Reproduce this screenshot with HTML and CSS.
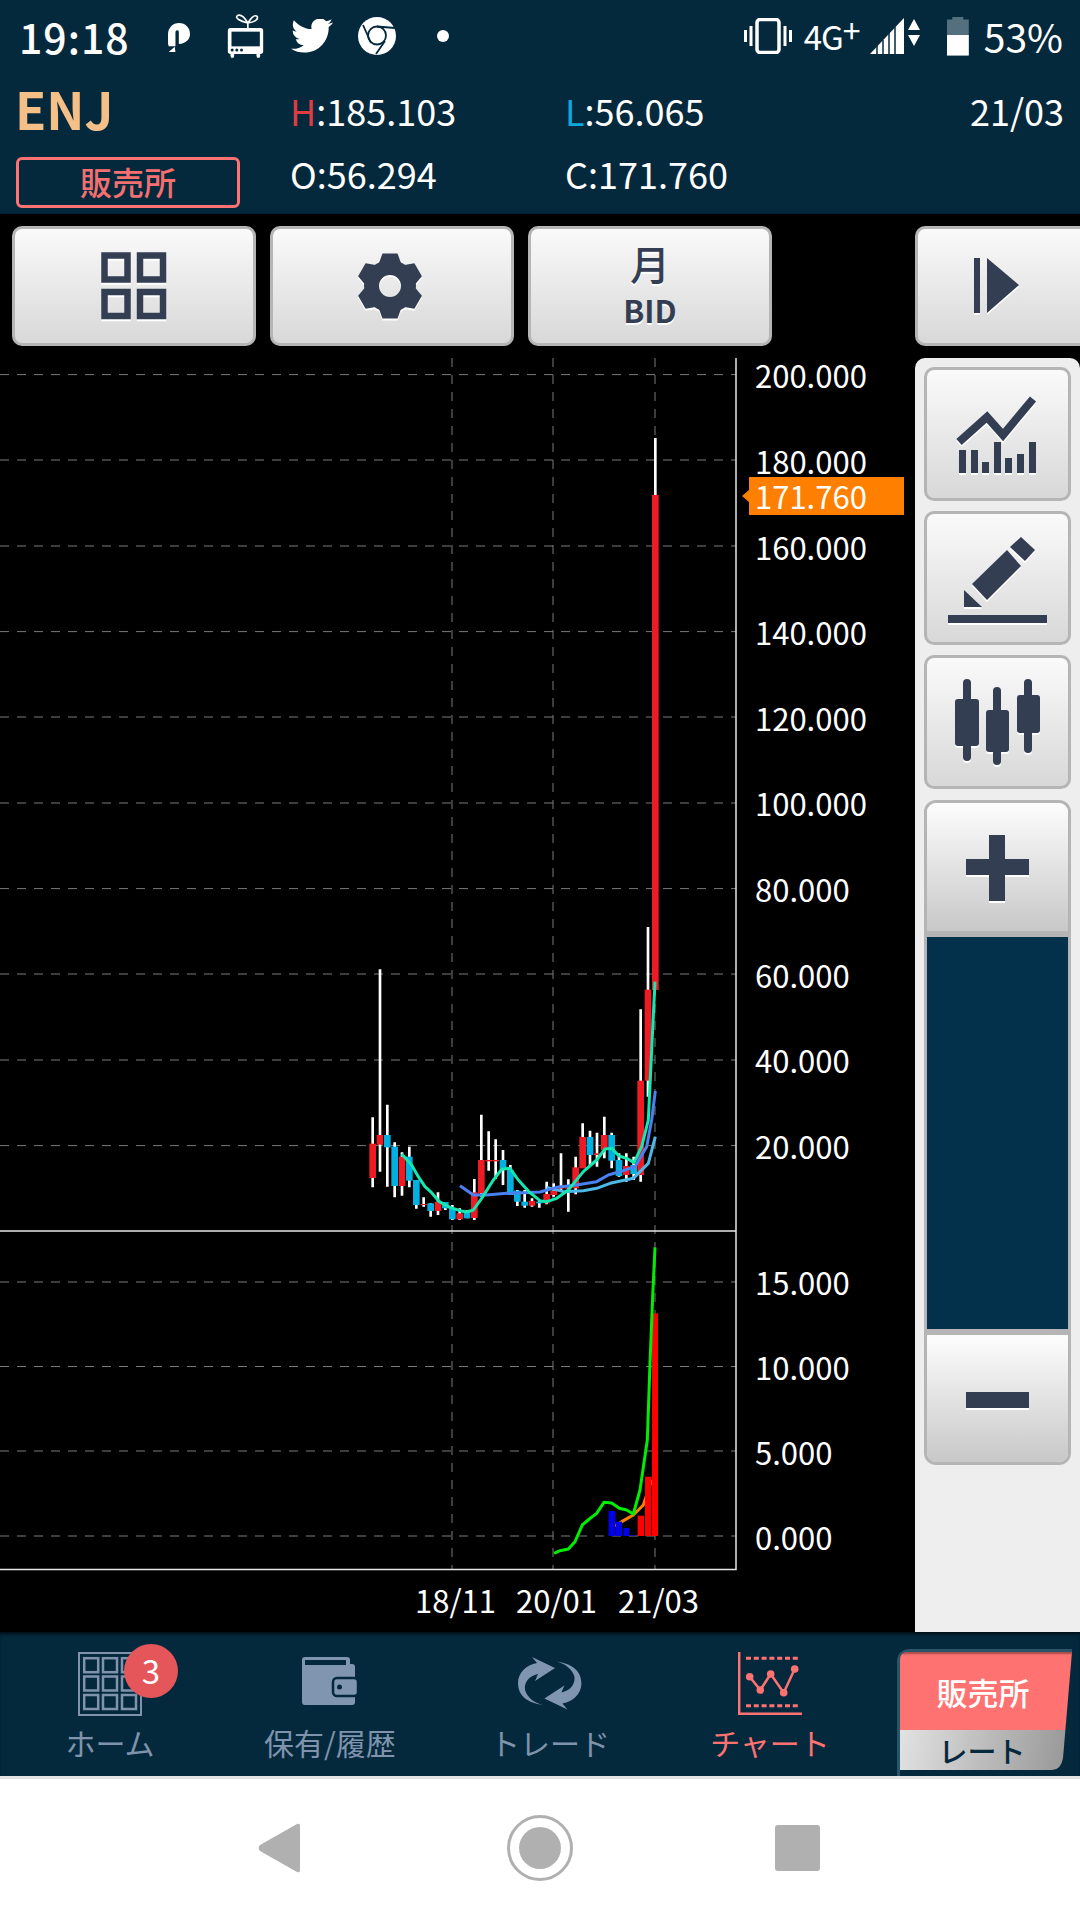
FILE: index.html
```html
<!DOCTYPE html>
<html lang="ja">
<head>
    <meta charset="UTF-8">
    <meta name="viewport" content="width=device-width, initial-scale=1.0">
    <title>ENJ チャート</title>
    <link rel="stylesheet" href="styles.css">
</head>
<body>
<div class="app">
    <div class="statusbar">
        <span class="clock">19:18</span>
        <svg class="st-icon st-p" viewBox="0 0 65 85"><path fill="#fff" d="M0 34C0 14 14 0 33 0c18 0 32 14 32 32 0 16-12 28-33 30V28c0-5-1-7-5-7s-5 3-5 8v39H2L0 60zM2 85l18-15 2 15z"/></svg>
        <svg class="st-icon st-tv" viewBox="230 25 110 132"><path d="M292 52C270 47 250 37 262 29c13-4 23 11 30 23 8-12 18-27 28-20 5 10-10 18-28 20zM292 52v16" fill="none" stroke="#fff" stroke-width="5"/><rect x="232" y="67" width="106" height="78" rx="8" fill="#fff"/><rect x="243" y="78" width="85" height="44" fill="#05293c"/><circle cx="245" cy="133" r="4.500" fill="#05293c"/><circle cx="259" cy="133" r="4.500" fill="#05293c"/><circle cx="273" cy="133" r="4.500" fill="#05293c"/><path d="M240 145h11v6l-2 5h-7l-2-5zM318 145h11v6l-2 5h-7l-2-5z" fill="#fff"/></svg>
        <svg class="st-icon st-tw" viewBox="0 2.500 24 19.500"><path fill="#fff" d="M23.953 4.570a10 10 0 01-2.825.775 4.958 4.958 0 002.163-2.723c-.951.555-2.005.959-3.127 1.184a4.920 4.920 0 00-8.384 4.482C7.690 8.095 4.067 6.130 1.640 3.162a4.822 4.822 0 00-.666 2.475c0 1.710.870 3.213 2.188 4.096a4.904 4.904 0 01-2.228-.616v.060a4.923 4.923 0 003.946 4.827 4.996 4.996 0 01-2.212.085 4.936 4.936 0 004.604 3.417 9.867 9.867 0 01-6.102 2.105c-.390 0-.779-.023-1.170-.067a13.995 13.995 0 007.557 2.209c9.053 0 13.998-7.496 13.998-13.985 0-.210 0-.420-.015-.630A9.935 9.935 0 0024 4.590z"/></svg>
        <svg class="st-icon st-ch" viewBox="0 0 38 38"><circle cx="19" cy="19" r="19" fill="#fff"/><circle cx="19" cy="18.500" r="9" fill="none" stroke="#05293c" stroke-width="1.800"/><path d="M19 9.500L37 11M5 8l8 18M27 24l-9 13" stroke="#05293c" stroke-width="1.800"/></svg>
        <span class="st-dot"></span>
        <svg class="st-icon st-vib" viewBox="0 0 48 36"><rect x="13" y="1.500" width="22" height="33" rx="3" fill="none" stroke="#fff" stroke-width="3.500"/><path d="M7 8v20M1.500 12v12M41 8v20M46.500 12v12" stroke="#fff" stroke-width="3"/></svg>
        <span class="st-net">4G<sup>+</sup></span>
        <svg class="st-icon st-sig" viewBox="0 0 52 36"><path d="M0 36L34 0v36z" fill="#fff"/><path d="M7 36V28M13 36V22M19 36V15M25 36V9" stroke="#05293c" stroke-width="1.500"/><path d="M44 0l6 11H38zM44 27l6-11H38z" fill="#fff" transform="translate(0 1)"/></svg>
        <span class="st-batt"><i></i></span>
        <span class="st-pct">53%</span>
    </div>

    <div class="quote">
        <div class="quote-left">
            <div class="symbol">ENJ</div>
            <div class="market">販売所</div>
        </div>
        <div class="quote-col col-a">
            <div><span class="hi">H</span>:185.103</div>
            <div>O:56.294</div>
        </div>
        <div class="quote-col col-b">
            <div><span class="lo">L</span>:56.065</div>
            <div>C:171.760</div>
        </div>
        <div class="quote-date">21/03</div>
    </div>

    <div class="toolbar">
        <div class="btn tool">
            <svg class="ico" width="66" height="68" viewBox="0 0 66 68"><g fill="none" stroke="#333e52" stroke-width="6.500"><rect x="3.500" y="3.500" width="23" height="24"/><rect x="39" y="3.500" width="23" height="24"/><rect x="3.500" y="40" width="23" height="24"/><rect x="39" y="40" width="23" height="24"/></g></svg>
        </div>
        <div class="btn tool">
            <svg class="ico ico-gear" width="68" height="68" viewBox="-34 -34 68 68">
                <circle r="18.500" fill="none" stroke="#333e52" stroke-width="15"/>
                <g fill="#333e52">
                    <path d="M-7.500-32.500h15L11-23h-22z"/>
                    <path d="M-7.500-32.500h15L11-23h-22z" transform="rotate(60)"/>
                    <path d="M-7.500-32.500h15L11-23h-22z" transform="rotate(120)"/>
                    <path d="M-7.500-32.500h15L11-23h-22z" transform="rotate(180)"/>
                    <path d="M-7.500-32.500h15L11-23h-22z" transform="rotate(240)"/>
                    <path d="M-7.500-32.500h15L11-23h-22z" transform="rotate(300)"/>
                </g>
            </svg>
        </div>
        <div class="btn tool tool-text">
            <span class="tt-top">月</span>
            <span class="tt-bid">BID</span>
        </div>
        <div class="btn tool-play">
            <svg class="ico" width="46" height="56" viewBox="0 0 46 56"><rect x="0" y="0" width="6" height="55" fill="#333e52"/><path d="M13 0l32 27L13 55z" fill="#333e52"/></svg>
        </div>
    </div>

    <div class="main">
        <svg class="chart" width="915" height="1274" viewBox="0 358 915 1274">
            <!-- grid -->
            <g class="grid">
                <path d="M0 374.600H736M0 460H736M0 546H736M0 631.600H736M0 717H736M0 803H736M0 888.600H736M0 974H736M0 1060H736M0 1145.600H736"/>
                <path d="M0 1282H736M0 1366.500H736M0 1451H736M0 1536H736"/>
                <path d="M452 358V1569M553 358V1569M655 358V1569"/>
            </g>
            <path class="frame" d="M736 358V1569.500H0M0 1231H736"/>

            <!-- candles, drawn in 3x units from the crop at 350,950 -->
            <g transform="translate(350 950) scale(.33333)">
                <g class="wicks">
                    <path d="M68 502V712M90 58V665M112 464V710M134 577V742M156 607V737M178 590V712M199 690V776M221 742V770M242 760V800M264 727V795M286 756V780M307 765V810M329 775V810M351 780V805M373 687V810M394 494V740M416 544V662M437 568V686M459 600V705M481 645V735M502 720V768M524 720V773M546 745V770M568 750V773M590 695V763M611 700V740M633 610V725M655 688V785M677 620V733M698 520V650M720 542V645M741 548V650M763 500V625M785 548V655M807 610V680M829 610V695M851 620V690M872 178V695M894 -69V440M916 -1536V-1365"/>
                </g>
                <g class="up">
                    <rect x="58" y="581" width="20" height="103"/><rect x="80" y="555" width="20" height="29"/><rect x="146" y="620" width="20" height="88"/><rect x="211" y="762" width="20" height="3"/><rect x="254" y="756" width="20" height="27"/><rect x="319" y="790" width="20" height="18"/><rect x="363" y="727" width="20" height="77"/><rect x="384" y="630" width="20" height="100"/><rect x="406" y="630" width="20" height="4"/><rect x="427" y="630" width="20" height="4"/><rect x="536" y="753" width="20" height="14"/><rect x="580" y="732" width="20" height="28"/><rect x="601" y="722" width="20" height="13"/><rect x="623" y="713" width="20" height="3"/><rect x="645" y="712" width="20" height="4"/><rect x="667" y="652" width="20" height="63"/><rect x="688" y="561" width="20" height="94"/><rect x="731" y="610" width="20" height="5"/><rect x="753" y="555" width="20" height="45"/><rect x="819" y="648" width="20" height="27"/><rect x="862" y="392" width="20" height="283"/><rect x="884" y="119" width="20" height="273"/><rect x="906" y="-1365" width="20" height="1485"/>
                </g>
                <g class="down">
                    <rect x="102" y="555" width="20" height="37"/><rect x="124" y="590" width="20" height="118"/><rect x="168" y="620" width="20" height="72"/><rect x="189" y="690" width="20" height="75"/><rect x="232" y="760" width="20" height="23"/><rect x="276" y="756" width="20" height="19"/><rect x="297" y="775" width="20" height="33"/><rect x="341" y="785" width="20" height="20"/><rect x="449" y="630" width="20" height="30"/><rect x="471" y="660" width="20" height="75"/><rect x="492" y="722" width="20" height="33"/><rect x="514" y="755" width="20" height="12"/><rect x="558" y="755" width="20" height="5"/><rect x="710" y="561" width="20" height="54"/><rect x="775" y="555" width="20" height="77"/><rect x="797" y="630" width="20" height="48"/><rect x="841" y="645" width="20" height="27"/>
                </g>
                <polyline class="ma ma-c" points="590,712 640,725 700,722 740,715 780,700 850,685 895,640 916,560"/>
                <polyline class="ma ma-b" points="330,707 370,735 410,735 470,730 520,728 570,726 620,712 680,705 740,695 775,675 820,662 855,650 890,590 905,510 916,423"/>
                <polyline class="ma ma-a" points="155,612 185,645 205,680 225,710 245,728 268,755 300,772 330,782 350,786 370,780 395,745 430,690 455,658 480,655 505,690 540,728 570,752 590,755 620,745 655,720 700,665 740,630 765,597 785,595 807,618 830,625 852,638 875,590 895,510 905,300 915,95"/>
            </g>

            <!-- volume panel, 3x units from the crop at 530,1220 -->
            <g transform="translate(530 1220) scale(.33333)">
                <polyline class="osc osc-o" points="255,918 275,905 310,885 340,855 365,780"/>
                <g class="vol-down"><rect x="236" y="873" width="20" height="75"/><rect x="258" y="905" width="18" height="43"/><rect x="280" y="924" width="18" height="24"/><rect x="300" y="946" width="18" height="2"/></g>
                <g class="vol-up"><rect x="323" y="887" width="19" height="61"/><rect x="345" y="770" width="19" height="178"/><rect x="366" y="280" width="18" height="668"/></g>
                <polyline class="osc osc-g" points="72,1000 90,992 115,987 135,965 157,915 178,897 200,880 222,847 245,849 268,865 290,870 310,882 330,810 352,660 360,430 368,230 375,82"/>
            </g>

            <!-- axis -->
            <g class="axis">
                <text x="755" y="388">200.000</text>
                <text x="755" y="474">180.000</text>
                <text x="755" y="560">160.000</text>
                <text x="755" y="645">140.000</text>
                <text x="755" y="731">120.000</text>
                <text x="755" y="816">100.000</text>
                <text x="755" y="902">80.000</text>
                <text x="755" y="988">60.000</text>
                <text x="755" y="1073">40.000</text>
                <text x="755" y="1159">20.000</text>
                <text x="755" y="1295">15.000</text>
                <text x="755" y="1380">10.000</text>
                <text x="755" y="1465">5.000</text>
                <text x="755" y="1550">0.000</text>
                <text x="415" y="1613">18/11</text>
                <text x="516" y="1613">20/01</text>
                <text x="618" y="1613">21/03</text>
            </g>
            <path class="tag" d="M742 496l7-6v-13H904v38H749v-13z"/>
            <text class="axis-now" x="755" y="509">171.760</text>
        </svg>

        <div class="side">
            <div class="btn side-btn">
                <svg class="ico" width="147" height="128" viewBox="0 3 147 128"><polyline points="35,75 63,50 79,68 109,32" fill="none" stroke="#333e52" stroke-width="8"/><g fill="#333e52"><rect x="35" y="83" width="7" height="23"/><rect x="47" y="83" width="7" height="23"/><rect x="58" y="95" width="7" height="11"/><rect x="70" y="75" width="7" height="31"/><rect x="81" y="91" width="7" height="15"/><rect x="93" y="87" width="7" height="19"/><rect x="105" y="75" width="7" height="31"/></g></svg>
            </div>
            <div class="btn side-btn">
                <svg class="ico" width="147" height="128" viewBox="0 3 147 128"><g fill="#333e52"><path d="M48 73L83 39l14 16-34 34z"/><path d="M86 36l11-10 14 13-10 11z"/><path d="M40 79l18 17H40z"/><rect x="24" y="104" width="99" height="8"/></g></svg>
            </div>
            <div class="btn side-btn">
                <svg class="ico" width="147" height="128" viewBox="0 3 147 128"><g fill="#333e52"><rect x="39" y="24" width="8" height="82" rx="4"/><rect x="31" y="44" width="24" height="47" rx="3"/><rect x="69" y="32" width="8" height="78" rx="4"/><rect x="62" y="55" width="23" height="42" rx="3"/><rect x="100" y="24" width="8" height="74" rx="4"/><rect x="93" y="40" width="23" height="38" rx="3"/></g></svg>
            </div>
            <div class="zoombox">
                <div class="zoom-key zoom-plus">
                    <svg class="ico" width="63" height="66" viewBox="0 0 63 66"><path fill="#333e52" d="M23 0h16v24h24v16H39v26H23V40H0V24h23z"/></svg>
                </div>
                <div class="zoom-track"></div>
                <div class="zoom-key zoom-minus">
                    <svg class="ico" width="63" height="16" viewBox="0 0 63 16"><rect width="63" height="16" fill="#333e52"/></svg>
                </div>
            </div>
        </div>
    </div>

    <div class="tabbar">
        <div class="tab">
            <svg width="64" height="64" viewBox="0 0 64 64" fill="none" stroke="#7f93ad"><rect x="1" y="1" width="62" height="62" stroke-width="2"/><g stroke-width="2.500"><rect x="6.200" y="6.200" width="14" height="14"/><rect x="25" y="6.200" width="14" height="14"/><rect x="44" y="6.200" width="14" height="14"/><rect x="6.200" y="24.500" width="14" height="14"/><rect x="25" y="24.500" width="14" height="14"/><rect x="44" y="24.500" width="14" height="14"/><rect x="6.200" y="43" width="14" height="14"/><rect x="25" y="43" width="14" height="14"/><rect x="44" y="43" width="14" height="14"/></g></svg>
            <span class="badge">3</span>
            <span class="tab-label">ホーム</span>
        </div>
        <div class="tab">
            <svg width="66" height="64" viewBox="0 0 66 64"><path fill="#8096b0" d="M8 5H50a3 3 0 013 3v4h2a3 3 0 013 3v35a3 3 0 01-3 3H8a3 3 0 01-3-3V8a3 3 0 013-3z"/><path fill="#05293c" d="M8 8H49V13H8z"/><rect x="36" y="26" width="25" height="18" rx="4" fill="#8096b0" stroke="#05293c" stroke-width="2.500"/><circle cx="42.500" cy="35" r="2.500" fill="#05293c"/></svg>
            <span class="tab-label">保有/履歴</span>
        </div>
        <div class="tab">
            <svg width="64" height="64" viewBox="0 0 64 64" fill="#8096b0"><path d="M14 5L37 16 17 29l3-7C11 24 6 30 7 38c2 7 9 13 18 15C10 51 0 44 0 31 0 21 8 13 19 11z"/><path d="M14 5L37 16 17 29l3-7C11 24 6 30 7 38c2 7 9 13 18 15C10 51 0 44 0 31 0 21 8 13 19 11z" transform="rotate(180 31.700 31.300)"/></svg>
            <span class="tab-label">トレード</span>
        </div>
        <div class="tab tab-active">
            <svg width="64" height="64" viewBox="0 0 64 64"><path d="M1.200 0V61.800H64" fill="none" stroke="#ff7272" stroke-width="2.500"/><path d="M8 6.300H61M8 53.700H61" fill="none" stroke="#ff7272" stroke-width="3" stroke-dasharray="5 2.800"/><polyline points="11.700,24.700 22.300,38 32.700,22 45.700,40.700 56.700,17" fill="none" stroke="#ff7272" stroke-width="2.500"/><g fill="#ff7272"><circle cx="11.700" cy="24.700" r="3.800"/><circle cx="22.300" cy="38" r="3.800"/><circle cx="32.700" cy="22" r="3.800"/><circle cx="45.700" cy="40.700" r="3.800"/><circle cx="56.700" cy="17" r="3.800"/></g></svg>
            <span class="tab-label">チャート</span>
        </div>
        <div class="mode">
            <div class="mode-body">
                <div class="mode-on">販売所</div>
                <div class="mode-off">レート</div>
            </div>
        </div>
    </div>

    <div class="sysnav">
        <svg width="42" height="50" viewBox="0 0 42 50"><path d="M39 1a2 2 0 013 2v44a2 2 0 01-3 2L2 28a4 4 0 010-6z" fill="#b0b0b0"/></svg>
        <svg class="sys-home" width="66" height="66" viewBox="0 0 66 66"><circle cx="33" cy="33" r="31.500" fill="none" stroke="#b0b0b0" stroke-width="3"/><circle cx="33" cy="33" r="21" fill="#b0b0b0"/></svg>
        <span class="sys-square"></span>
    </div>
</div>
</body>
</html>
```

FILE: styles.css
```css
* {
    box-sizing: border-box;
}

html, body {
    margin: 0;
    padding: 0;
    background: #000;
}

body {
    width: 1080px;
    height: 1920px;
    overflow: hidden;
    font-family: "Noto Sans CJK JP", "Noto Sans", sans-serif;
    color: #fff;
}

.app {
    display: flex;
    flex-direction: column;
    height: 1920px;
}

/* status bar */
.statusbar {
    display: flex;
    align-items: center;
    height: 72px;
    background: #05293c;
    padding: 0 17px 0 19px;
}

.clock {
    font-size: 41px;
    font-weight: 500;
    letter-spacing: 1px;
    width: 149px;
}

.st-icon {
    flex: none;
    display: block;
}

.st-p { width: 22px; height: 29px; margin-top: 3px; }
.st-tv { width: 37px; height: 44px; margin-left: 37px; }
.st-tw { width: 42px; height: 34px; margin-left: 27px; }
.st-ch { width: 38px; height: 38px; margin-left: 25px; }

.st-dot {
    width: 12px;
    height: 12px;
    border-radius: 50%;
    background: #fff;
    margin-left: 41px;
    margin-right: auto;
}

.st-vib { width: 48px; height: 36px; }

.st-net {
    font-size: 33px;
    margin-left: 12px;
    width: 66px;
    letter-spacing: -1px;
    white-space: nowrap;
}

.st-net sup {
    font-size: 32px;
    line-height: 0;
    vertical-align: 7px;
}

.st-sig { width: 52px; height: 36px; }

.st-batt {
    width: 22px;
    height: 39px;
    margin-left: 25px;
    background: #54707f;
    position: relative;
    clip-path: polygon(25% 0, 75% 0, 75% 8%, 100% 8%, 100% 100%, 0 100%, 0 8%, 25% 8%);
}

.st-batt i {
    position: absolute;
    left: 0;
    right: 0;
    bottom: 0;
    height: 53%;
    background: #fff;
}

.st-pct {
    font-size: 39px;
    margin-left: 15px;
}

/* quote header */
.quote {
    display: flex;
    height: 142px;
    background: #05293c;
    border-bottom: 1px solid #032030;
    font-size: 36px;
}

.quote-left {
    width: 290px;
    padding-left: 15px;
}

.symbol {
    font-size: 51px;
    font-weight: 700;
    color: #f5c088;
    line-height: 58px;
    margin-top: 7px;
}

.market {
    width: 224px;
    height: 51px;
    margin: 20px 0 0 1px;
    border: 3px solid #ff7272;
    border-radius: 6px;
    color: #f47070;
    font-size: 32px;
    font-weight: 500;
    line-height: 43px;
    text-align: center;
}

.quote-col {
    display: flex;
    flex-direction: column;
    gap: 13px;
    padding-top: 13px;
    line-height: 50px;
    width: 275px;
}

.hi { color: #dd3c40; }
.lo { color: #0fa8dc; }

.quote-date {
    margin-left: auto;
    padding-right: 16px;
    padding-top: 13px;
    line-height: 50px;
}

/* toolbar */
.toolbar {
    display: flex;
    gap: 14px;
    height: 144px;
    padding: 12px 0 12px 12px;
}

.btn {
    display: flex;
    flex: none;
    align-items: center;
    justify-content: center;
    border: 3px solid #b5b5b5;
    border-radius: 10px;
    background: linear-gradient(#fafafa, #d8d8d8);
}

.ico {
    display: block;
    flex: none;
    filter: drop-shadow(0 2px 0 #fff);
}

.ico-gear {
    margin-right: 4px;
}

.tool {
    width: 244px;
}

.tool-text {
    flex-direction: column;
    color: #333e52;
    text-shadow: 0 2px 0 #fff;
}

.tt-top {
    font-size: 40px;
    font-weight: 500;
    line-height: 48px;
}

.tt-bid {
    font-size: 31px;
    font-weight: 700;
    line-height: 46px;
}

.tool-play {
    width: 165px;
    margin-left: 129px;
    border-right: 0;
    border-radius: 10px 0 0 10px;
    padding-right: 4px;
}

/* chart + side rail */
.main {
    display: flex;
    height: 1274px;
}

.chart {
    display: block;
    flex: none;
    background: #000;
    overflow: visible;
}

.grid path {
    fill: none;
    stroke: #7a7a7a;
    stroke-width: 1;
    stroke-dasharray: 9 8;
}

.frame {
    fill: none;
    stroke: #e8e8e8;
    stroke-width: 1.500;
}

.wicks path {
    fill: none;
    stroke: #fff;
    stroke-width: 8;
}

.up rect { fill: #ed1c24; }
.down rect { fill: #00b0e0; }

.ma {
    fill: none;
    stroke-width: 9;
    stroke-linejoin: round;
}

.ma-a { stroke: #14e8b0; }
.ma-b { stroke: #4a80f0; }
.ma-c { stroke: #4db8e8; }

.vol-down rect { fill: #0000ee; }
.vol-up rect { fill: #ff0000; }

.osc {
    fill: none;
    stroke-width: 9;
    stroke-linejoin: round;
}

.osc-o { stroke: #ff8000; }
.osc-g { stroke: #00ee00; }

.axis text, .axis-now {
    font-size: 31px;
    fill: #fff;
}

.tag {
    fill: #ff7f00;
}

.side {
    display: flex;
    flex-direction: column;
    gap: 10px;
    width: 165px;
    padding: 9px 9px 0;
    background: #eeeeee;
    border-radius: 10px 10px 0 0;
}

.side-btn {
    height: 134px;
}

.side-btn:nth-child(3) {
    margin-bottom: 1px;
}

.zoombox {
    display: flex;
    flex-direction: column;
    height: 665px;
    border: 3px solid #b5b5b5;
    border-radius: 12px;
    overflow: hidden;
}

.zoom-key {
    display: flex;
    align-items: center;
    justify-content: center;
    background: linear-gradient(#fdfdfd, #c8c8c8);
}

.zoom-plus {
    height: 134px;
    padding-top: 2px;
    border-bottom: 6px solid #b5b5b5;
}

.zoom-minus {
    height: 133px;
    padding-top: 3px;
    border-top: 6px solid #b5b5b5;
}

.zoom-track {
    flex: 1;
    background: #03304a;
}

/* bottom tabs */
.tabbar {
    display: flex;
    height: 147px;
    background: #05293c;
    box-shadow: inset 0 3px 3px -1px #011018;
    border-bottom: 3px solid #e4e4e4;
}

.tab {
    position: relative;
    display: flex;
    flex-direction: column;
    align-items: center;
    width: 220px;
    padding-top: 20px;
}

.tab-label {
    font-size: 30px;
    line-height: 40px;
    margin-top: 6px;
    color: #7f93ad;
}

.tab-active .tab-label {
    color: #ff7272;
}

.badge {
    position: absolute;
    left: 124px;
    top: 12px;
    width: 54px;
    height: 54px;
    border-radius: 50%;
    background: #e5565a;
    color: #fff;
    font-size: 33px;
    line-height: 52px;
    text-align: center;
}

.mode {
    margin: 17px 0 0 17px;
    width: 175px;
    height: 127px;
    border-left: 3px solid #2a5468;
    border-top: 3px solid #2a5468;
    border-radius: 12px 0 0 0;
    font-weight: 500;
    text-align: center;
}

.mode-body {
    display: flex;
    flex-direction: column;
    height: 118px;
    clip-path: path("M8 0H172L163 106Q161 118 152 118H0V8Q0 0 8 0Z");
}

.mode-on {
    height: 78px;
    padding-right: 6px;
    background: #ff7272;
    box-shadow: inset 0 3px 2px -1px #a84a4a;
    font-size: 31px;
    line-height: 80px;
}

.mode-off {
    flex: 1;
    padding-right: 8px;
    background: linear-gradient(100deg, #e2e2e2, #959595);
    color: #05293c;
    font-size: 29px;
    line-height: 40px;
}

/* android nav */
.sysnav {
    flex: 1;
    display: flex;
    align-items: center;
    justify-content: space-between;
    background: #fff;
    padding: 0 260px 3px 258px;
}

.sys-home {
    margin-left: 5px;
}

.sys-square {
    width: 45px;
    height: 46px;
    border-radius: 3px;
    background: #b0b0b0;
}
```
